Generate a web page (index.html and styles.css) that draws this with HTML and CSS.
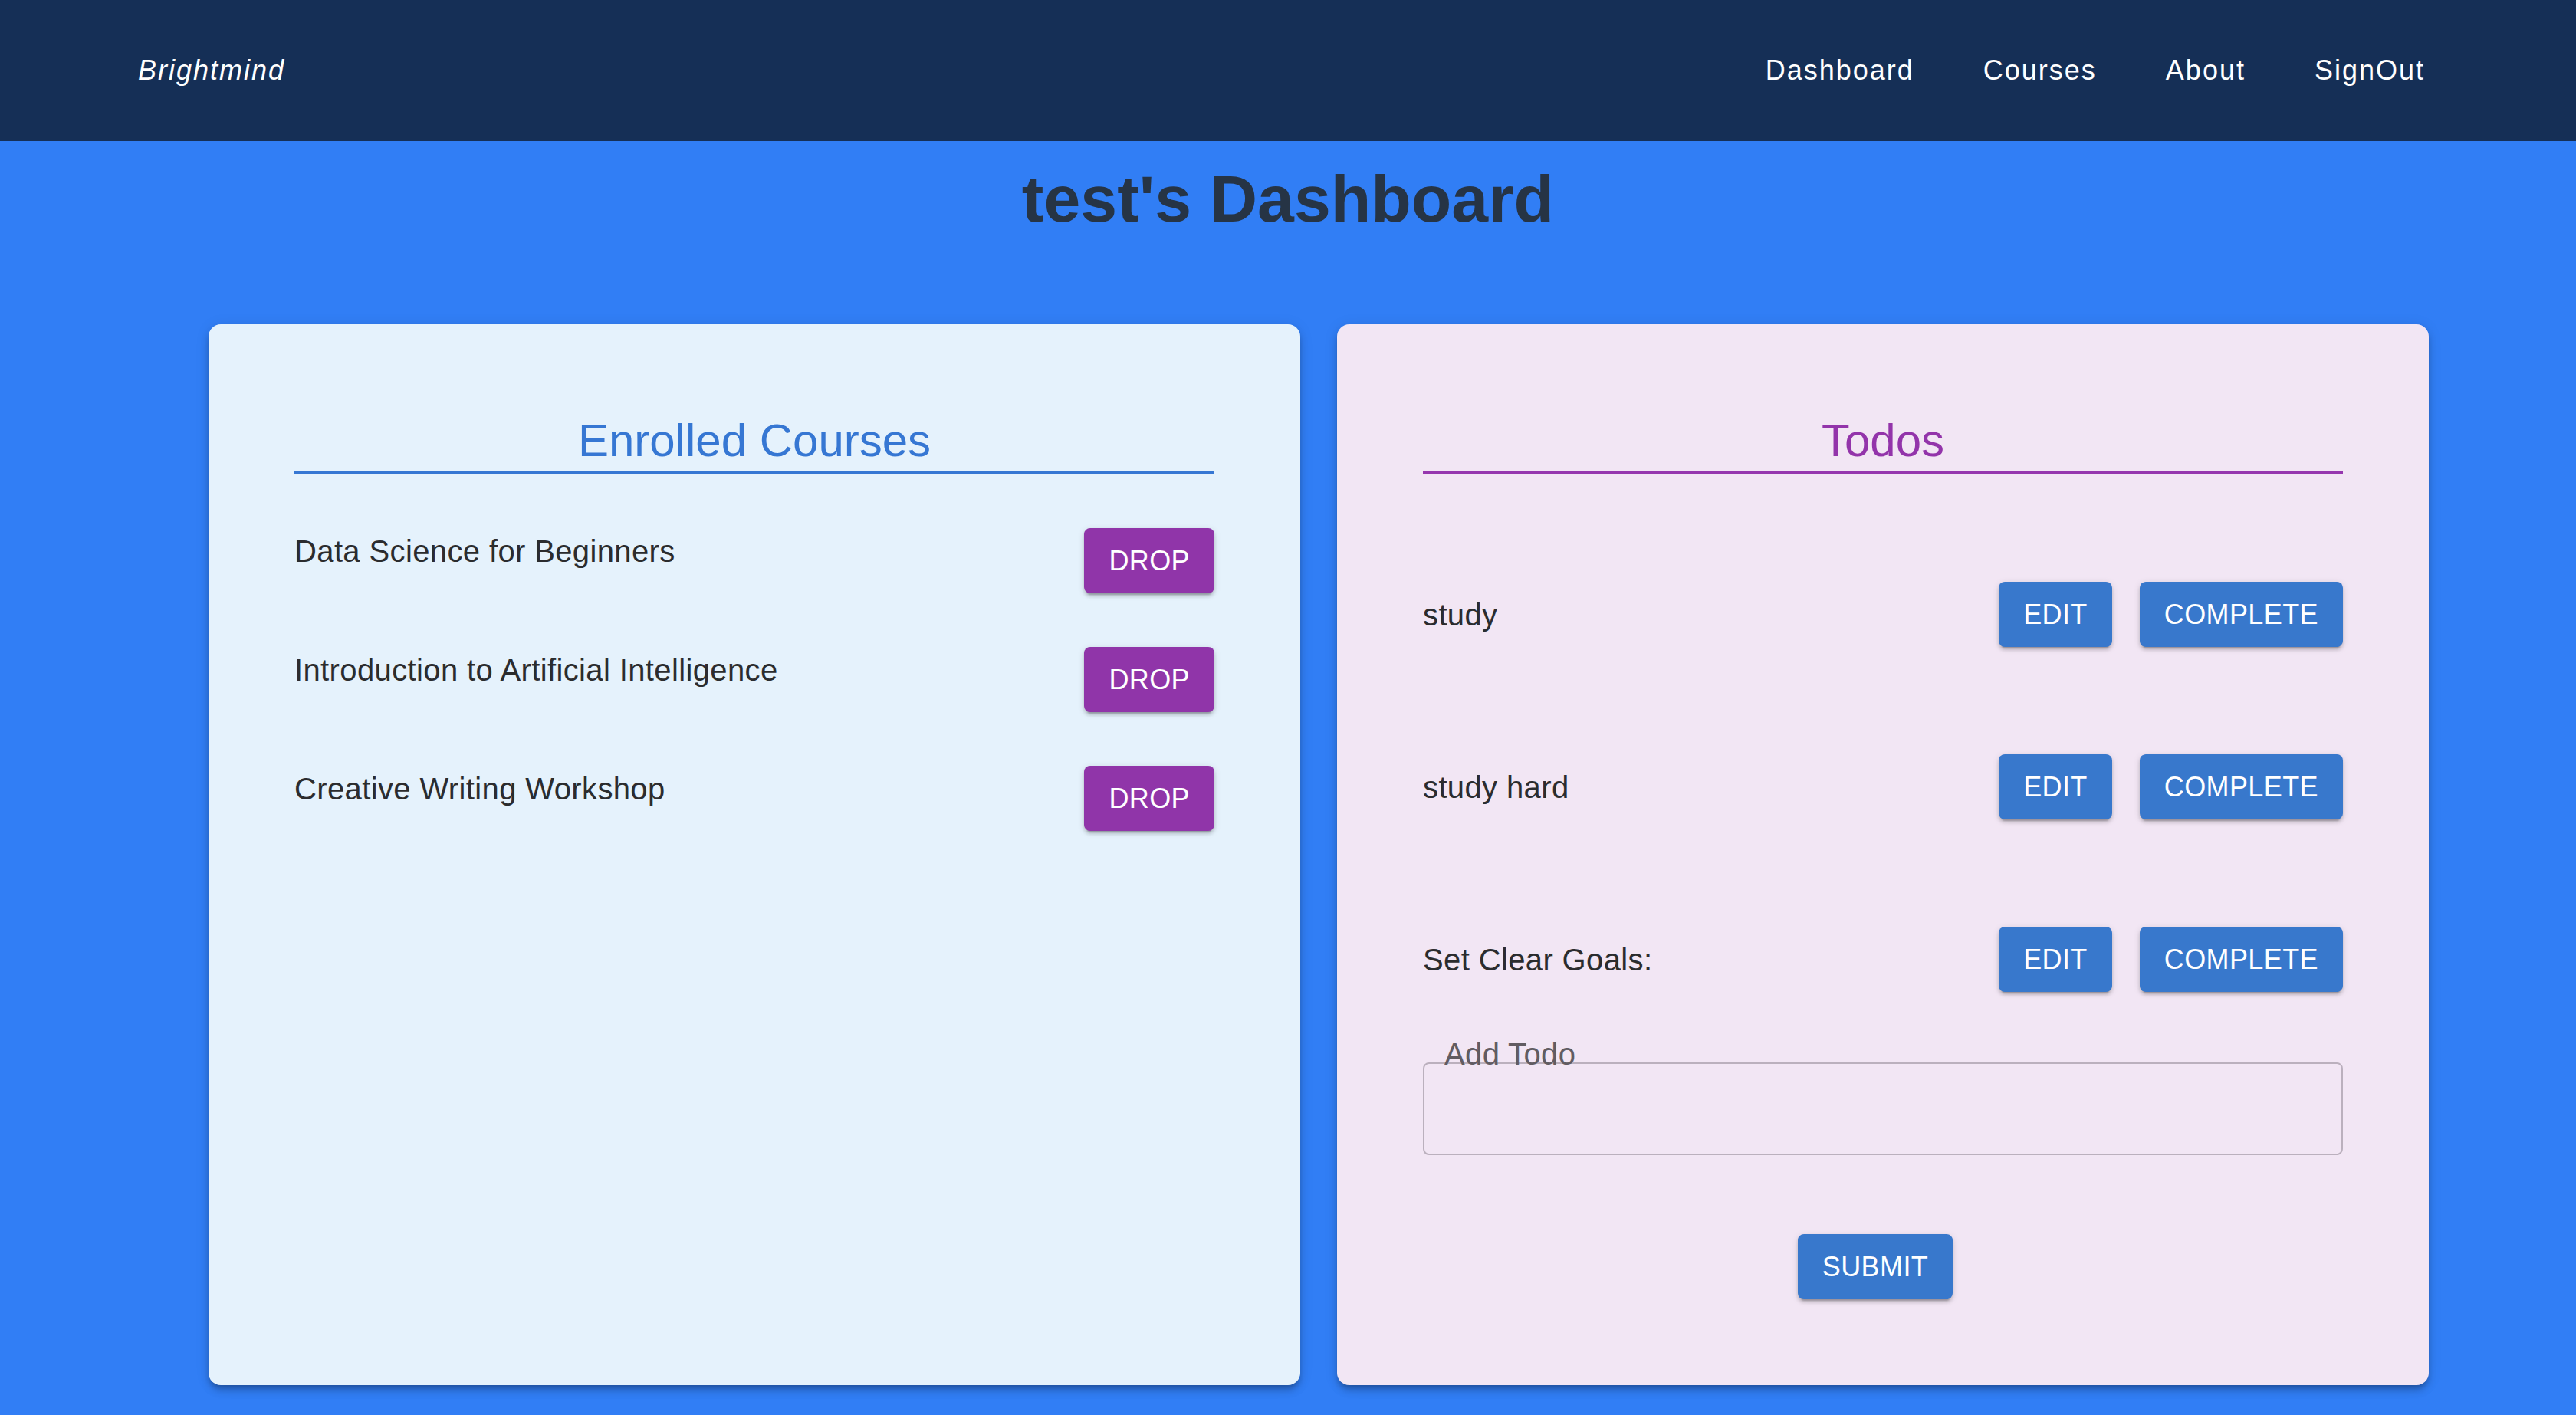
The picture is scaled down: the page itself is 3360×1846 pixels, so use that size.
FILE: index.html
```html
<!DOCTYPE html>
<html lang="en">
<head>
<meta charset="utf-8">
<title>Brightmind – Dashboard</title>
<link rel="stylesheet" href="styles.css">
</head>
<body>
<header class="appbar">
  <a class="brand" href="#">Brightmind</a>
  <nav class="nav">
    <a class="nav-link" href="#">Dashboard</a>
    <a class="nav-link" href="#">Courses</a>
    <a class="nav-link" href="#">About</a>
    <a class="nav-link" href="#">SignOut</a>
  </nav>
</header>
<main class="page">
  <h1 class="page-title">test's Dashboard</h1>
  <div class="panels">
    <section class="card card-courses">
      <h2 class="card-title">Enrolled Courses</h2>
      <ul class="course-list">
        <li class="course-row"><span class="row-text">Data Science for Beginners</span><button class="btn btn-purple" type="button">Drop</button></li>
        <li class="course-row"><span class="row-text">Introduction to Artificial Intelligence</span><button class="btn btn-purple" type="button">Drop</button></li>
        <li class="course-row"><span class="row-text">Creative Writing Workshop</span><button class="btn btn-purple" type="button">Drop</button></li>
      </ul>
    </section>
    <section class="card card-todos">
      <h2 class="card-title">Todos</h2>
      <ul class="todo-list">
        <li class="todo-row"><span class="row-text">study</span><div class="actions"><button class="btn btn-blue" type="button">Edit</button><button class="btn btn-blue" type="button">Complete</button></div></li>
        <li class="todo-row"><span class="row-text">study hard</span><div class="actions"><button class="btn btn-blue" type="button">Edit</button><button class="btn btn-blue" type="button">Complete</button></div></li>
        <li class="todo-row"><span class="row-text">Set Clear Goals:</span><div class="actions"><button class="btn btn-blue" type="button">Edit</button><button class="btn btn-blue" type="button">Complete</button></div></li>
      </ul>
      <form class="todo-form">
        <div class="field">
          <label class="field-label" for="add-todo">Add Todo</label>
          <input class="field-input" id="add-todo" type="text">
        </div>
        <button class="btn btn-blue btn-submit" type="button">Submit</button>
      </form>
    </section>
  </div>
</main>
</body>
</html>
```

FILE: styles.css
```css
* { box-sizing: border-box; }

html, body {
  margin: 0;
  padding: 0;
}

body {
  font-family: "Liberation Sans", Arial, Helvetica, sans-serif;
  background: #317ef5;
  min-height: 100vh;
  color: #2b2c2e;
}

.appbar {
  height: 184px;
  background: #152f56;
  display: flex;
  align-items: center;
  justify-content: space-between;
  padding: 0 197px 0 180px;
}

.brand {
  color: #fff;
  font-style: italic;
  font-size: 36px;
  letter-spacing: 2px;
  text-decoration: none;
}

.nav {
  display: flex;
  gap: 90px;
}

.nav-link {
  color: #fff;
  font-size: 36px;
  letter-spacing: 2px;
  text-decoration: none;
}

.page {
  padding-bottom: 38px;
}

.page-title {
  margin: 26px 0 0;
  text-align: center;
  font-size: 86px;
  line-height: 98px;
  font-weight: 700;
  color: #263445;
}

.panels {
  display: flex;
  gap: 48px;
  padding: 0 192px 0 272px;
  margin-top: 115px;
}

.card {
  flex: 1 1 0;
  border-radius: 16px;
  padding: 117px 112px 112px;
  box-shadow: 0 6px 6px -2px rgba(0, 0, 0, 0.2), 0 8px 12px 0 rgba(0, 0, 0, 0.12), 0 2px 18px 0 rgba(0, 0, 0, 0.1);
}

.card-courses { background: #e5f2fc; }
.card-todos { background: #f2e6f4; }

.card-title {
  margin: 0;
  font-size: 60px;
  line-height: 70px;
  font-weight: 400;
  text-align: center;
  padding-bottom: 5px;
  border-bottom: 4px solid;
}

.card-courses .card-title { color: #3677d3; border-color: #3677d3; }
.card-todos .card-title { color: #9334aa; border-color: #9637ae; }

.course-list,
.todo-list {
  list-style: none;
  margin: 0;
  padding: 0;
  display: flex;
  flex-direction: column;
}

.course-list {
  margin-top: 70px;
  gap: 70px;
}

.course-row {
  display: flex;
  justify-content: space-between;
  align-items: flex-start;
}

.row-text {
  font-size: 40px;
  line-height: 60px;
  letter-spacing: 0.375px;
}

.todo-list {
  margin-top: 140px;
  gap: 140px;
}

.todo-row {
  display: flex;
  justify-content: space-between;
  align-items: center;
}

.actions {
  display: flex;
  gap: 36px;
}

.btn {
  font-family: inherit;
  font-size: 36px;
  line-height: 63px;
  padding: 11px 32px;
  border: 0;
  border-radius: 8px;
  color: #fff;
  text-transform: uppercase;
  letter-spacing: 0.4px;
  cursor: pointer;
  box-shadow: 0 6px 2px -4px rgba(0, 0, 0, 0.2), 0 4px 4px 0 rgba(0, 0, 0, 0.14), 0 2px 10px 0 rgba(0, 0, 0, 0.12);
}

.btn-purple { background: #9035a9; }
.btn-blue { background: #3878cc; }

.todo-form {
  display: flex;
  flex-direction: column;
  align-items: center;
  margin-top: 92px;
}

.field {
  position: relative;
  width: 100%;
}

.field-label {
  position: absolute;
  left: 28px;
  top: -34px;
  font-size: 40px;
  line-height: 46px;
  letter-spacing: 0.375px;
  color: #615c62;
}

.field-input {
  display: block;
  width: 100%;
  height: 121px;
  border: 2px solid #bbb0bd;
  border-radius: 8px;
  background: transparent;
  font-family: inherit;
  font-size: 40px;
  padding: 0 28px;
  color: #2b2c2e;
}

.btn-submit {
  margin-top: 103px;
  margin-right: 20px;
}
```
